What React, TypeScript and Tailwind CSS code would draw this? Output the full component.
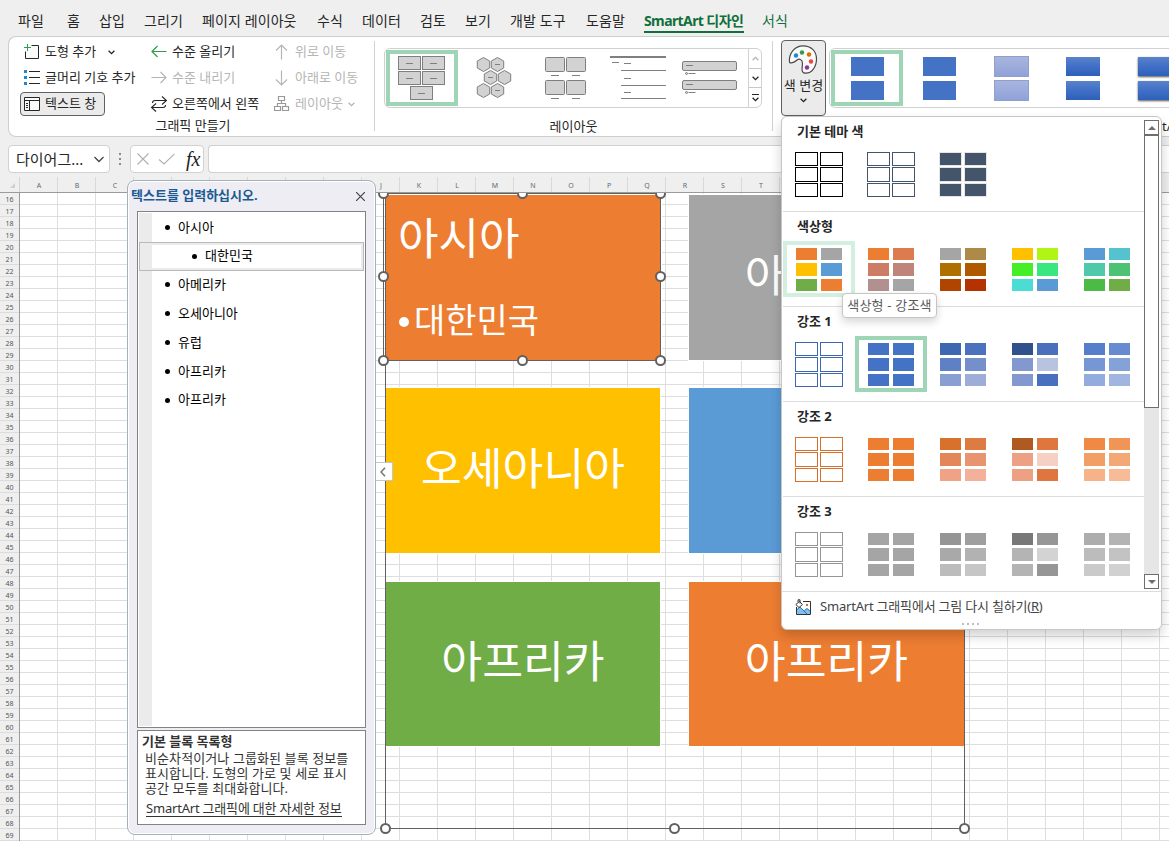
import type { ReactNode } from "react";
import clsx from "clsx";

const tabs = [
  { label: "파일", width: "w-[49px]" },
  { label: "홈", width: "w-[32px]" },
  { label: "삽입", width: "w-[45px]" },
  { label: "그리기", width: "w-[58px]" },
  { label: "페이지 레이아웃", width: "w-[115px]" },
  { label: "수식", width: "w-[45px]" },
  { label: "데이터", width: "w-[58px]" },
  { label: "검토", width: "w-[45px]" },
  { label: "보기", width: "w-[45px]" },
  { label: "개발 도구", width: "w-[76px]" },
  { label: "도움말", width: "w-[58px]" },
];

// D-I and everything after T lie under the floating panes
const columns = Array.from({ length: 31 }, (_, i) =>
  i < 3 || (i > 8 && i < 20) ? String.fromCharCode(65 + i) : ""
);
const rows = Array.from({ length: 54 }, (_, i) => 16 + i);

const outline = (border: string) => Array(6).fill(border + " bg-white");
const solid = (fill: string) => Array(6).fill(fill);

const colorSections = [
  {
    title: "기본 테마 색",
    tiles: [
      outline("border-black"),
      outline("border-[#44546a]"),
      solid("border-[#e7e6e6] bg-[#44546a]"),
    ],
  },
  {
    title: "색상형",
    hovered: 0,
    tiles: [
      ["bg-[#ed7d31]", "bg-[#a5a5a5]", "bg-[#ffc000]", "bg-[#5b9bd5]", "bg-[#70ad47]", "bg-[#ed7d31]"],
      ["bg-[#ed7d31]", "bg-[#dc7b4d]", "bg-[#cd7c65]", "bg-[#bf847a]", "bg-[#b19090]", "bg-[#a5a5a5]"],
      ["bg-[#a5a5a5]", "bg-[#ad8a47]", "bg-[#ae7000]", "bg-[#b05a00]", "bg-[#b14500]", "bg-[#b43200]"],
      ["bg-[#ffc000]", "bg-[#b0f514]", "bg-[#46ee28]", "bg-[#3ae67f]", "bg-[#4bddd3]", "bg-[#5b9bd5]"],
      ["bg-[#5b9bd5]", "bg-[#55c2cf]", "bg-[#50c8aa]", "bg-[#4dc274]", "bg-[#4bbb45]", "bg-[#70ad47]"],
    ],
  },
  {
    title: "강조 1",
    selected: 1,
    tiles: [
      outline("border-[#3d67b1]"),
      solid("bg-[#4472c4]"),
      ["bg-[#3d67b1]", "bg-[#4c72bd]", "bg-[#6080c6]", "bg-[#758fca]", "bg-[#8a9fd1]", "bg-[#9eacd8]"],
      ["bg-[#2f528f]", "bg-[#4a6fbd]", "bg-[#8398cf]", "bg-[#b8c3e1]", "bg-[#8398cf]", "bg-[#4a6fbd]"],
      ["bg-[#567ecb]", "bg-[#678bd0]", "bg-[#7697d3]", "bg-[#85a2d8]", "bg-[#93abdd]", "bg-[#a0b6e0]"],
    ],
  },
  {
    title: "강조 2",
    tiles: [
      outline("border-[#d6712c]"),
      solid("bg-[#ed7d31]"),
      ["bg-[#d8712c]", "bg-[#dc7b42]", "bg-[#e3875a]", "bg-[#e99470]", "bg-[#efa285]", "bg-[#f3b09a]"],
      ["bg-[#ae5a21]", "bg-[#df7640]", "bg-[#eda083]", "bg-[#f6d0c5]", "bg-[#eda083]", "bg-[#df7640]"],
      ["bg-[#ef8944]", "bg-[#f19556]", "bg-[#f29f66]", "bg-[#f3a976]", "bg-[#f5b387]", "bg-[#f7bc97]"],
    ],
  },
  {
    title: "강조 3",
    tiles: [
      outline("border-[#959595]"),
      solid("bg-[#a5a5a5]"),
      ["bg-[#959595]", "bg-[#9f9f9f]", "bg-[#a9a9a9]", "bg-[#b2b2b2]", "bg-[#bcbcbc]", "bg-[#c6c6c6]"],
      ["bg-[#787878]", "bg-[#969696]", "bg-[#b4b4b4]", "bg-[#d3d3d3]", "bg-[#b4b4b4]", "bg-[#969696]"],
      ["bg-[#adadad]", "bg-[#b4b4b4]", "bg-[#bcbcbc]", "bg-[#c3c3c3]", "bg-[#cacaca]", "bg-[#d1d1d1]"],
    ],
  },
];

const outlineItems = [
  { text: "아시아" },
  { text: "대한민국", child: true },
  { text: "아메리카" },
  { text: "오세아니아" },
  { text: "유럽" },
  { text: "아프리카" },
  { text: "아프리카" },
];

function Chevron({ className }: { className?: string }) {
  return (
    <svg width="7" height="5" viewBox="0 0 7 5" className={className} fill="none" stroke="currentColor" strokeWidth="1.3">
      <path d="M0.6 0.8 3.5 3.7 6.4 0.8" />
    </svg>
  );
}

function Command({ icon, label, disabled, arrow }: { icon: ReactNode; label: string; disabled?: boolean; arrow?: string }) {
  return (
    <div className={clsx("flex h-[26px] items-center whitespace-nowrap", disabled ? "text-[#b5b5b5]" : "text-[#262626]")}>
      <svg width="16" height="16" viewBox="0 0 16 16" fill="none" stroke="currentColor" className="mr-[5px] shrink-0">
        {icon}
      </svg>
      <span>{label}</span>
      {arrow && <Chevron className={arrow} />}
    </div>
  );
}

function GraphicGroup() {
  return (
    <div className="flex w-[365px] shrink-0 flex-col">
      <div className="flex pt-[2px]">
        <div className="w-[127px] shrink-0 pl-[15px]">
          <Command
            label="도형 추가"
            arrow="ml-[12px]"
            icon={
              <>
                <path d="M7.5 1.5H14.5V14.5H1.5V7.5" fill="#fafafa" />
                <path d="M4 0V8M0 4H8" stroke="#fff" strokeWidth="3" />
                <path d="M3.5 0V7M0 3.5H7" stroke="#2e9c4b" />
              </>
            }
          />
          <Command
            label="글머리 기호 추가"
            icon={
              <>
                <path d="M5 1.5H16M5 7.5H16M5 13.5H16" />
                <path d="M0 0h3v3H0zM0 6h3v3H0zM0 12h3v3H0z" fill="#1e88d0" stroke="none" />
              </>
            }
          />
          <div className="-ml-[4px] mt-[1px] flex h-6 w-[85px] items-center rounded border border-[#616161] bg-[#ebebeb] pl-[3px]">
            <Command
              label="텍스트 창"
              icon={
                <>
                  <path d="M0.5 1.5H15.5V14.5H0.5zM0.5 4.5H15.5M5.5 4.5V14.5" fill="#fafafa" />
                  <path d="M2 7.5H4M2 9.5H4M2 11.5H4" />
                </>
              }
            />
          </div>
        </div>
        <div className="w-[123px] shrink-0 pl-[15px]">
          <Command label="수준 올리기" icon={<path d="M15.5 7.5H1M6.5 2 1 7.5 6.5 13" stroke="#2e9c4b" strokeWidth="1.2" />} />
          <Command disabled label="수준 내리기" icon={<path d="M0.5 7.5H15M9.500 2 15 7.5 9.5 13" strokeWidth="1.2" />} />
          <Command
            label="오른쪽에서 왼쪽"
            icon={<path d="M1.5 7C1.500 5 2.500 4.500 4 4.500H15.500M11 0.500 15.500 4.500 11 8.500M14.500 9C14.500 11 13.500 11.500 12 11.500H0.500M5 7.500 0.500 11.500 5 15.500" strokeWidth="1.1" />}
          />
        </div>
        <div className="shrink-0 pl-[15px]">
          <Command disabled label="위로 이동" icon={<path d="M7.5 15.5V1M2 6.500 7.5 1 13 6.500" strokeWidth="1.2" />} />
          <Command disabled label="아래로 이동" icon={<path d="M7.5 0.5V15M2 9.500 7.5 15 13 9.500" strokeWidth="1.2" />} />
          <Command
            disabled
            label="레이아웃"
            arrow="ml-[5px]"
            icon={<path d="M4.5 0.5H10.500V4.5H4.500zM0.500 10.500H6.500V14.500H0.500zM8.500 10.500H14.500V14.500H8.500zM7.500 4.500V7.500M3.500 10.500V7.500H11.500V10.500" stroke="#999" strokeWidth="1.2" />}
          />
        </div>
      </div>
      <div className="-mt-[2px] pl-[3px] text-center leading-5 text-[#262626]">그래픽 만들기</div>
    </div>
  );
}

function LayoutTile({ selected, children }: { selected?: boolean; children: ReactNode }) {
  return (
    <div className={clsx("h-14 w-[72px] border-4", selected ? "border-[#9fd5b7]" : "border-transparent")}>
      <svg width="72" height="56" viewBox="0 0 72 56" className="-m-1 max-w-none" fill="#d2d2d2" stroke="#7f7f7f">
        {children}
      </svg>
    </div>
  );
}

const hexagons = [[25.5, 14.5], [39.5, 14.5], [32.5, 27.5], [46.5, 27.5], [25.5, 40.5], [39.5, 40.5]];

function LayoutGallery() {
  return (
    <div className="flex h-[60px] w-[378px] rounded-md border border-[#d1d1d1] bg-white">
      <div className="flex w-[363px] pl-[1px] pt-[1px]">
        <LayoutTile selected>
          {[[12, 6], [36, 6], [12, 21], [36, 21], [24, 36]].map(([x, y]) => (
            <g key={x + "-" + y}>
              <rect x={x + 0.5} y={y + 0.5} width="22" height="13" />
              <path d={`M${x + 8} ${y + 7.5}h7`} />
            </g>
          ))}
        </LayoutTile>
        <LayoutTile>
          {hexagons.map(([x, y], i) => (
            <g key={i}>
              <path d={`M${x} ${y - 7}l6.2 3.5v7l-6.2 3.5l-6.2-3.5v-7z`} />
              {[1, 2, 5].includes(i) && <path d={`M${x - 2.5} ${y}h5`} />}
            </g>
          ))}
        </LayoutTile>
        <LayoutTile>
          {[[15, 7], [36, 7], [15, 30], [36, 30]].map(([x, y]) => (
            <g key={x + "-" + y}>
              <rect x={x + 0.5} y={y + 0.5} width="19" height="14" rx="1" />
              <path d={`M${x + 6} ${y + 18.5}h8`} />
            </g>
          ))}
        </LayoutTile>
        <LayoutTile>
          <path d="M8 7H64" strokeWidth="2" />
          <path d="M10 12.5h7M22 13.5h7M19 20.5H64M22 28.5h7M19 35.5H64M22 42.5h7M19 48.5H64" />
        </LayoutTile>
        <LayoutTile>
          {[11, 30].map((y) => (
            <g key={y}>
              <rect x="8.5" y={y + 0.5} width="54" height="9" rx="1.5" />
              <path d={`M12 ${y + 4.5}h7M14.5 ${y + 12.5}h7`} />
              <circle cx="12.5" cy={y + 12.5} r="1" />
            </g>
          ))}
        </LayoutTile>
      </div>
      <div className="flex flex-1 flex-col divide-y divide-[#c8c8c8] border-l border-[#d1d1d1] text-[#262626]">
        <div className="flex flex-1 items-center justify-center">
          <Chevron className="rotate-180 text-[#b5b5b5]" />
        </div>
        <div className="flex flex-1 items-center justify-center">
          <Chevron />
        </div>
        <div className="flex flex-1 flex-col items-center justify-center gap-[2px]">
          <div className="h-px w-[7px] bg-[#262626]" />
          <Chevron />
        </div>
      </div>
    </div>
  );
}

function StyleTile({ selected, block }: { selected?: boolean; block: string }) {
  return (
    <div
      className={clsx(
        "flex h-14 w-[72px] shrink-0 flex-col items-center justify-center gap-[5px] border-4",
        selected ? "border-[#9fd5b7]" : "border-transparent"
      )}
    >
      <div className={clsx("h-[19px]", block)} />
      <div className={clsx("h-[19px]", block)} />
    </div>
  );
}

function Ribbon() {
  return (
    <div className="relative ml-2 flex h-[101px] shrink-0 overflow-hidden rounded-l-lg border border-r-0 border-[#cecece] bg-white text-[13px]">
      <GraphicGroup />
      <div className="mt-1 h-[90px] w-px shrink-0 bg-[#d1d1d1]" />
      <div className="flex w-[397px] shrink-0 flex-col pl-[9px] pt-[11px]">
        <LayoutGallery />
        <div className="mt-[8px] pr-[9px] text-center leading-5 text-[#262626]">레이아웃</div>
      </div>
      <div className="mt-1 h-[90px] w-px shrink-0 bg-[#d1d1d1]" />
      <div className="ml-2 mt-[3px] flex h-[76px] w-[45px] shrink-0 flex-col items-center rounded border border-[#616161] bg-[#ebebeb] pt-1 text-[#262626]">
        <svg width="30" height="30" viewBox="0 0 30 30" className="-ml-[2px] shrink-0">
          <path
            d="M1.5 17C0.5 8 7 0.8 15 0.8C23 0.8 28.5 6 28.5 14C28.5 22 23.5 28.2 18 28.2C12 28.2 14.500 22.500 14.500 18.500C14.500 14 11 13.500 9 15C6.500 17.500 2 19 1.5 17Z"
            fill="#fafafa"
            stroke="#4a4a4a"
            strokeWidth="1.2"
          />
          <circle cx="8" cy="10.5" r="2.2" fill="#1e88d0" />
          <circle cx="14" cy="7.500" r="2.2" fill="#2e9c4b" />
          <circle cx="21" cy="9.500" r="2.2" fill="#dd6b08" />
          <circle cx="23" cy="16.500" r="2.2" fill="#ee4343" />
          <circle cx="19" cy="22.500" r="2.2" fill="#92309f" />
        </svg>
        <div className="whitespace-nowrap leading-5">색 변경</div>
        <Chevron className="mt-[3px] shrink-0" />
      </div>
      <div className="ml-[3px] mt-[11px] flex h-[60px] w-[400px] shrink-0 rounded-md border border-[#d1d1d1] bg-white pl-[1px] pt-[1px]">
        <StyleTile selected block="w-[33px] bg-[#4472c4]" />
        <StyleTile block="w-[33px] bg-[#4472c4]" />
        <StyleTile block="w-[33px] outline outline-[#929fcb] bg-linear-to-b from-[#a9b5df] to-[#8fa2d9]" />
        <StyleTile block="w-[34px] bg-linear-to-b from-[#5b83cb] via-[#3f6fc6] to-[#2f60b8]" />
        <StyleTile block="w-[34px] bg-linear-to-b from-[#5b83cb] via-[#3f6fc6] to-[#2f60b8] shadow-[0_1px_2px_#000a]" />
      </div>
      <div className="absolute left-[1121px] top-[79px] whitespace-nowrap leading-5 text-[#262626]">SmartArt 스타일</div>
    </div>
  );
}

function FormulaBar() {
  return (
    <div className="mt-2 flex h-7 shrink-0 pl-2">
      <div className="flex w-[102px] items-center justify-between rounded border border-[#d1d1d1] bg-white pl-[7px] pr-[5px] text-[15px] text-[#262626]">
        <span>다이어그...</span>
        <svg width="10" height="7" viewBox="0 0 10 7" fill="none" stroke="#444" strokeWidth="1.3">
          <path d="M0.5 1 5 5.5 9.5 1" />
        </svg>
      </div>
      <div className="flex w-5 flex-col items-center justify-center gap-[3px]">
        <div className="h-[2px] w-[2px] bg-[#8a8a8a]" />
        <div className="h-[2px] w-[2px] bg-[#8a8a8a]" />
        <div className="h-[2px] w-[2px] bg-[#8a8a8a]" />
      </div>
      <div className="flex w-[74px] items-center rounded border border-[#d1d1d1] bg-white pl-[6px]">
        <svg width="38" height="12" viewBox="0 0 38 12" className="shrink-0" fill="none" stroke="#b0b0b0" strokeWidth="1.1">
          <path d="M0.5 0.5 11.500 11.500M11.500 0.500 0.500 11.500M22 6.500 27 11 37.500 0.800" />
        </svg>
        <span className="ml-[11px] font-['Liberation_Serif',serif] text-[20px] italic leading-5 text-[#222]">fx</span>
      </div>
      <div className="ml-1 flex-1 rounded-l border border-r-0 border-[#d1d1d1] bg-white" />
    </div>
  );
}

function ColumnHeader() {
  return (
    <div className="flex h-5 shrink-0 overflow-hidden border-b border-[#9b9b9b] pt-[4px] text-[7px] leading-[18px] text-[#5d6b76]">
      <div className="flex w-5 shrink-0 items-end justify-end border-r border-[#d5d5d5] pb-[4px] pr-[4px]">
        <svg width="5" height="5">
          <path d="M5 0V5H0z" fill="#d0d0d0" />
        </svg>
      </div>
      {columns.map((c, i) => (
        <div key={i} className="w-[38px] shrink-0 border-r border-[#d9d9d9] pl-px text-center">
          {c}
        </div>
      ))}
    </div>
  );
}

function Handle({ at }: { at: string }) {
  return <div className={clsx("absolute -ml-[5px] -mt-[5px] size-[11px] rounded-full border-2 border-[#616161] bg-white", at)} />;
}

function Block({ place, children }: { place: string; children?: ReactNode }) {
  return (
    <div className={clsx("absolute flex items-center justify-center text-[44.4px] leading-none text-white outline outline-white", place)}>
      {children}
    </div>
  );
}

// Shapes sit on the sheet's free canvas, offsets are counted from cell A16
function SmartArt() {
  return (
    <div className="absolute inset-0">
      <Block place="left-[366px] top-[2px] h-[165px] w-[275px] bg-[#ed7d31]" />
      <Block place="left-[669px] top-[2px] h-[165px] w-[275px] bg-[#a5a5a5] pb-[4px]">아메리카</Block>
      <Block place="left-[366px] top-[195px] h-[165px] w-[274px] bg-[#ffc000] pb-[4px]">오세아니아</Block>
      <Block place="left-[669px] top-[195px] h-[165px] w-[275px] bg-[#5b9bd5] pb-[4px]">유럽</Block>
      <Block place="left-[366px] top-[389px] h-[164px] w-[274px] bg-[#70ad47] pb-[6px]">아프리카</Block>
      <Block place="left-[669px] top-[389px] h-[164px] w-[275px] bg-[#ed7d31] pb-[6px]">아프리카</Block>

      <div className="absolute left-[365px] top-0 h-[636px] w-[580px] border border-t-0 border-[#616161]" />
      <div className="absolute left-[363px] top-0 h-[168px] w-[278px] border border-[#616161] text-white">
        <div className="absolute left-[14px] top-[20px] text-[44px] leading-[48px]">아시아</div>
        <div className="absolute left-[15px] top-[106px] flex items-center text-[34px] leading-[40px]">
          <span className="mr-[5px] mt-[4px] size-[10px] rounded-full bg-white" />
          대한민국
        </div>
      </div>

      <Handle at="left-[363px] top-0" />
      <Handle at="left-[502px] top-0" />
      <Handle at="left-[640px] top-0" />
      <Handle at="left-[363px] top-[83px]" />
      <Handle at="left-[640px] top-[83px]" />
      <Handle at="left-[363px] top-[167px]" />
      <Handle at="left-[502px] top-[167px]" />
      <Handle at="left-[640px] top-[167px]" />
      <Handle at="left-[365px] top-[635px]" />
      <Handle at="left-[654px] top-[635px]" />
      <Handle at="left-[944px] top-[635px]" />

      <div className="absolute left-[355px] top-[269px] flex h-[19px] w-[18px] items-center justify-center border border-[#c6c6c6] bg-white pr-[2px]">
        <svg width="6" height="10" viewBox="0 0 6 10" fill="none" stroke="#777" strokeWidth="1.6">
          <path d="M5 0.8 1 5 5 9.2" />
        </svg>
      </div>
    </div>
  );
}

function Sheet() {
  return (
    <div className="flex flex-1 overflow-hidden">
      <div className="w-5 shrink-0 border-r border-[#9b9b9b] text-center text-[7px] text-[#555]">
        {rows.map((r) => (
          <div key={r} className="h-3 border-b border-[#dcdcdc] leading-[13px]">
            {r}
          </div>
        ))}
      </div>
      <div className="relative flex-1 overflow-hidden bg-white bg-[linear-gradient(to_right,transparent_37px,#dedede_37px),linear-gradient(to_bottom,transparent_11px,#dedede_11px)] bg-size-[38px_12px]">
        <SmartArt />
      </div>
    </div>
  );
}

function TextPane() {
  return (
    <div className="absolute left-[127px] top-[180px] flex h-[655px] w-[249px] flex-col rounded-lg border border-[#a3b2b8] bg-[#eeedf4] px-[9px] pb-[9px] text-[13px] shadow-[inset_0_0_0_1px_#fff]">
      <div className="-mx-[6px] flex h-[30px] shrink-0 items-center justify-between">
        <span className="font-bold text-[#1b5a92]">텍스트를 입력하십시오.</span>
        <svg width="9" height="9" viewBox="0 0 9 9" className="mr-[7px]" stroke="#444" strokeWidth="1.2">
          <path d="M0 0 9 9M9 0 0 9" />
        </svg>
      </div>
      <div className="relative h-[517px] w-[229px] shrink-0 border border-[#828282] bg-white p-px">
        <div className="absolute bottom-px left-px top-px w-[13px] bg-[#ebebeb]" />
        <div className="relative text-black">
          {outlineItems.map((item, i) => (
            <div
              key={i}
              className={clsx(
                "flex h-[28.8px] items-center",
                item.child ? "border border-[#b9b9b9] pl-[52px] shadow-[inset_0_0_0_2px_#ebebeb]" : "pl-[26px]"
              )}
            >
              <span className="mr-[8px] size-[5px] rounded-full bg-black" />
              {item.text}
            </div>
          ))}
        </div>
      </div>
      <div className="mt-[2px] h-[95px] w-[229px] shrink-0 border border-[#828282] bg-white pl-[4px] text-[#333]">
        <div className="font-bold leading-[20px]">기본 블록 목록형</div>
        <div className="whitespace-nowrap pl-[3px] leading-[15px] tracking-[0.1px]">
          비순차적이거나 그룹화된 블록 정보를
          <br />
          표시합니다. 도형의 가로 및 세로 표시
          <br />
          공간 모두를 최대화합니다.
        </div>
        <span className="ml-[4px] mt-[5px] inline-block whitespace-nowrap border-b border-[#333] leading-[15px] tracking-[-0.2px]">
          SmartArt 그래픽에 대한 자세한 정보
        </span>
      </div>
    </div>
  );
}

function ColorTile({ cells, state }: { cells: string[]; state?: string }) {
  return (
    <div className={clsx("h-14 w-[72px] border-4", state ?? "border-transparent")}>
      <div className="ml-2 mt-[2px] grid w-12 grid-cols-[23px_23px] grid-rows-[14px_15px_14px] gap-x-[2px] gap-y-px">
        {cells.map((c, i) => (
          <div key={i} className={clsx("border bg-clip-padding", !c.includes("border") && "border-transparent", c)} />
        ))}
      </div>
    </div>
  );
}

function ColorMenu() {
  return (
    <div className="absolute left-[781px] top-[116px] flex h-[514px] w-[381px] flex-col rounded-md border border-[#c6c6c6] bg-white shadow-[0_6px_12px_#0000002e]">
      <div className="flex h-[475px] shrink-0 border-b border-[#dcdcdc]">
        <div className="ml-px w-[361px]">
          {colorSections.map((s) => (
            <div key={s.title} className="h-[95px] border-b border-[#dcdcdc] last:border-b-0">
              <div className="h-[29px] pl-[14px] text-[13px] font-bold leading-[28px] text-[#262626]">{s.title}</div>
              <div className="flex">
                {s.tiles.map((cells, i) => (
                  <ColorTile
                    key={i}
                    cells={cells}
                    state={s.selected === i ? "border-[#9fd5b7]" : s.hovered === i ? "border-[#d3efe0]" : undefined}
                  />
                ))}
              </div>
            </div>
          ))}
        </div>
        <div className="mt-[3px] flex h-[469px] w-[15px] flex-col bg-[#e6e6e6]">
          <div className="flex h-[15px] items-center justify-center border border-[#6e6e6e] bg-white">
            <svg width="8" height="4">
              <path d="M0 4 4 0 8 4z" fill="#6e6e6e" />
            </svg>
          </div>
          <div className="h-[273px] border border-[#6e6e6e] bg-white" />
          <div className="mt-auto flex h-[15px] items-center justify-center border border-[#6e6e6e] bg-white">
            <svg width="8" height="4">
              <path d="M0 0 4 4 8 0z" fill="#6e6e6e" />
            </svg>
          </div>
        </div>
      </div>
      <div className="flex h-[30px] items-center pl-[13px] text-[13px] text-[#444]">
        <svg width="17" height="17" viewBox="0 0 17 17" fill="none" className="mr-[8px]">
          <path d="M1.5 8V15.500H15.500V2.500H8" stroke="#333" />
          <path d="M2 15V10.500L5 8L12 15zM9 11.500L12 9.500L15 12V15H12z" fill="#83beec" />
          <path d="M2 10.500 5 8 12 15M9.500 11.500 12 9.500 15 12" stroke="#1e78c0" />
          <rect x="11" y="5" width="2" height="2" fill="#dd6b08" />
          <path d="M4.500 2.500 0.800 5.500 4 8.500 7.500 5.500zM3 3V0.800H5V4.500" fill="#fff" stroke="#333" />
        </svg>
        <span className="tracking-[-0.2px]">
          SmartArt 그래픽에서 그림 다시 칠하기(<span className="underline">R</span>)
        </span>
      </div>
      <div className="flex justify-center gap-[3px] pr-[3px] pt-[1px]">
        {[0, 1, 2, 3].map((d) => (
          <div key={d} className="size-[2px] bg-[#bdbdc6]" />
        ))}
      </div>
    </div>
  );
}

export default function App() {
  return (
    <div className="relative flex h-[841px] w-[1169px] flex-col overflow-hidden bg-[#efefef] font-['Noto_Sans','Noto_Sans_CJK_KR',sans-serif]">
      <div className="flex h-9 shrink-0 items-start pl-[18px] pt-[10px] text-[14px] leading-[22px] text-[#262626]">
        {tabs.map((t) => (
          <div key={t.label} className={clsx("shrink-0 whitespace-nowrap tracking-[0.1px]", t.width)}>
            {t.label}
          </div>
        ))}
        <div className="w-[118px] shrink-0">
          <div className="h-[23px] w-[100px] whitespace-nowrap border-b-2 border-[#0f703b] font-bold tracking-[-0.6px] text-[#0f703b]">SmartArt 디자인</div>
        </div>
        <div className="text-[#0f703b]">서식</div>
      </div>
      <Ribbon />
      <FormulaBar />
      <ColumnHeader />
      <Sheet />
      <TextPane />
      <ColorMenu />
      <div className="absolute left-[842px] top-[293px] flex h-[25px] w-[95px] items-center justify-center whitespace-nowrap rounded border border-[#c6c6c6] bg-white text-[13px] tracking-[0.2px] text-[#5c5c5c] shadow-[0_4px_8px_#00000029]">
        색상형 - 강조색
      </div>
    </div>
  );
}
